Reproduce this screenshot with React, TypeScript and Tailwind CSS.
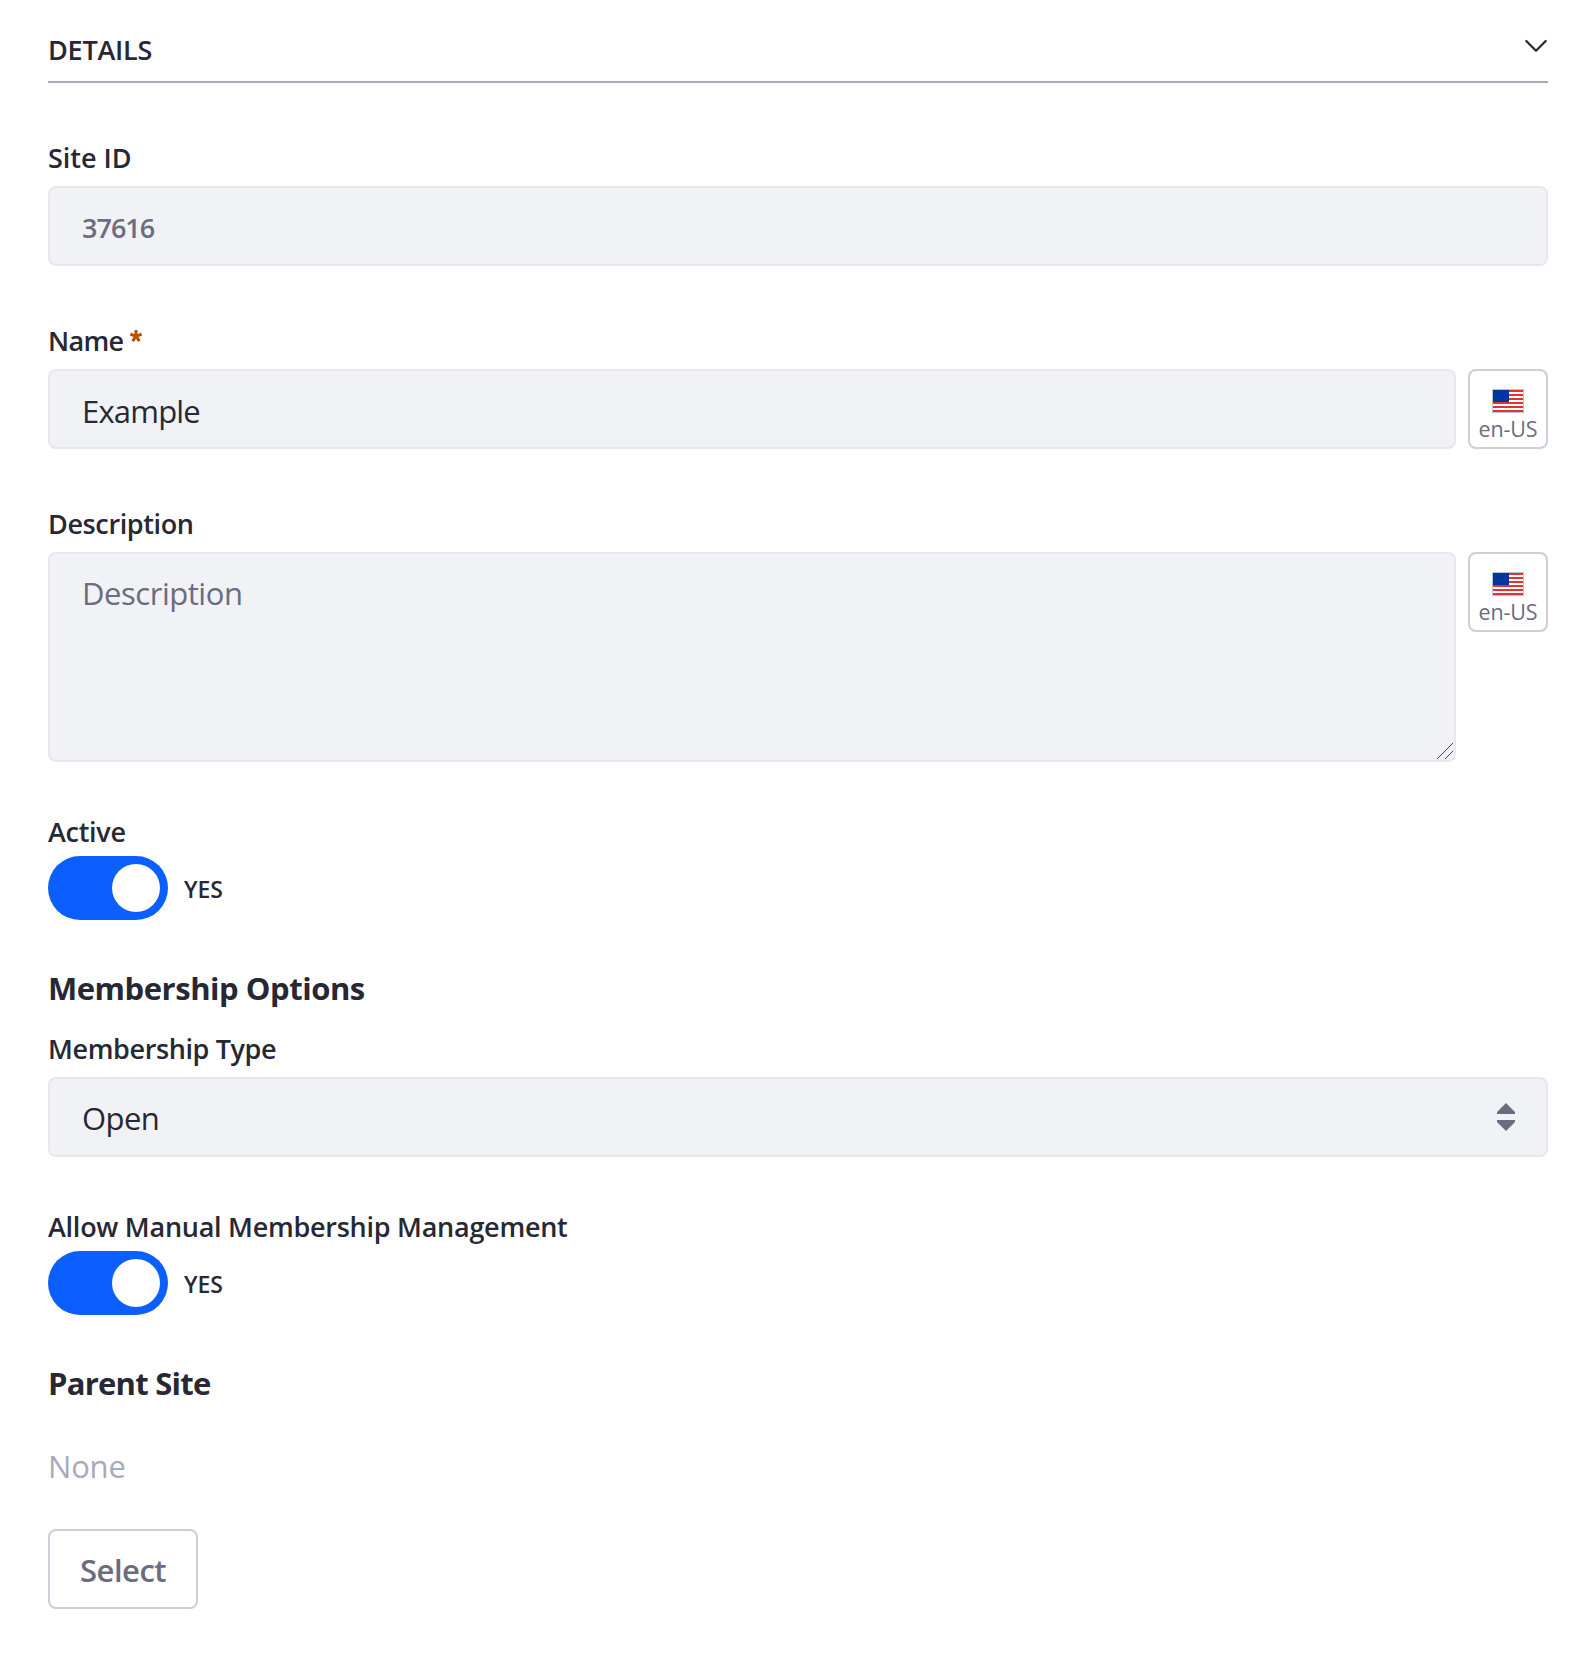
import type { ReactNode } from "react";

function Label({ className = "", children }: { className?: string; children: ReactNode }) {
  return (
    <div className={`flex whitespace-nowrap text-[27px] font-semibold leading-[43px] ${className}`}>
      {children}
    </div>
  );
}

const fieldBox = "rounded-lg border-2 border-[#e7e7ed] bg-[#f1f2f5]";

function RequiredMark() {
  return (
    <svg
      className="ml-[7px] mt-[11px] h-3 w-3"
      viewBox="0 0 12 12"
      stroke="#b95000"
      strokeWidth="3"
      fill="none"
      aria-label="Required"
    >
      <path d="M6 6.2V0M6 6.2L.4 4.2M6 6.2l5.6-2M6 6.2l-3.4 4.9M6 6.2l3.4 4.9" />
    </svg>
  );
}

function Flag() {
  return (
    <svg className="h-6 w-8" viewBox="0 0 32 24" shapeRendering="crispEdges">
      <rect width="32" height="24" fill="#b4c5cf" />
      <rect x="1" y="1" width="30" height="22" fill="#fff" />
      {[1, 5, 9, 13, 17, 21].map((y) => (
        <rect key={y} x="1" y={y} width="30" height="2" fill="#e33232" />
      ))}
      <rect x="1" y="1" width="16" height="12" fill="#0035a0" />
    </svg>
  );
}

function LocaleButton() {
  return (
    <button className="flex h-20 w-20 shrink-0 flex-col items-center gap-1 rounded-lg border-2 border-[#cdced9] bg-white pt-[18px] text-[#6b6c7e]">
      <Flag />
      <span className="whitespace-nowrap text-[21.5px] leading-6 tracking-[-0.1px]">en-US</span>
    </button>
  );
}

function Toggle() {
  return (
    <div className="flex h-16 items-center">
      <div className="flex h-16 w-[120px] items-center justify-end rounded-full bg-[#0b5fff] pr-2">
        <div className="h-12 w-12 rounded-full bg-white" />
      </div>
      <span className="ml-4 pt-0.5 text-[23px] font-semibold tracking-[-0.1px]">YES</span>
    </div>
  );
}

export default function App() {
  return (
    <main className="min-h-[1660px] bg-white px-12 font-['Open_Sans',sans-serif] text-[#272833]">
      <header className="flex h-[83px] items-start justify-between border-b-2 border-[#a7a9bc] pt-7">
        <h2 className="text-[27px] font-semibold leading-[43px] tracking-[-0.24px]">DETAILS</h2>
        <svg
          className="mt-[11px] h-[14px] w-6"
          viewBox="0 0 24 14"
          fill="none"
          stroke="#272833"
          strokeWidth="2.2"
          strokeLinecap="round"
          strokeLinejoin="round"
        >
          <path d="M2.3 2L12 11.7 21.7 2" />
        </svg>
      </header>

      <section className="mt-[53px]">
        <Label className="mb-[7px]">Site ID</Label>
        <div className={`${fieldBox} flex h-20 items-center px-8 pt-[5px] text-[27px] font-semibold tracking-[-1px] text-[#6b6c7e]`}>
          37616
        </div>
      </section>

      <section className="mt-[53px]">
        <Label className="mb-[7px]">
          <span className="tracking-[-0.7px]">Name</span>
          <RequiredMark />
        </Label>
        <div className="flex gap-3">
          <div className={`${fieldBox} flex h-20 flex-1 items-center px-8 pt-1 text-[31px] tracking-[-0.8px]`}>
            Example
          </div>
          <LocaleButton />
        </div>
      </section>

      <section className="mt-[53px]">
        <Label className="mb-[7px] tracking-[-0.38px]">Description</Label>
        <div className="flex items-start gap-3">
          <div className={`${fieldBox} relative h-[210px] flex-1 px-8 pt-[15px] text-[31px] leading-[48px] tracking-[-0.46px] text-[#6b6c7e]`}>
            Description
            <svg className="absolute bottom-px right-px h-4 w-4" viewBox="0 0 16 16" stroke="#45464f" strokeWidth="1">
              <path d="M0 16L16 0M8 16l8-8" />
            </svg>
          </div>
          <LocaleButton />
        </div>
      </section>

      <section className="mt-12">
        <Label className="mb-[3px] tracking-[-0.3px]">Active</Label>
        <Toggle />
      </section>

      <section className="mt-11">
        <h3 className="text-[31px] font-bold leading-[48px] tracking-[-0.46px]">Membership Options</h3>
        <Label className="mb-[7px] mt-[15px] tracking-[-0.38px]">Membership Type</Label>
        <div className={`${fieldBox} flex h-20 items-center justify-between pl-8 pr-[31px]`}>
          <span className="pt-0.5 text-[31px] tracking-[-0.6px]">Open</span>
          <svg className="h-7 w-[18px]" viewBox="0 0 18 28" fill="#6b6c7e">
            <path d="M9 0L18 9v2H0V9zM0 17h18v2L9 28 0 19z" />
          </svg>
        </div>
        <Label className="mb-[3px] mt-12 tracking-[-0.26px]">Allow Manual Membership Management</Label>
        <Toggle />
      </section>

      <section className="mt-11">
        <h3 className="text-[31px] font-bold leading-[48px] tracking-[-0.75px]">Parent Site</h3>
        <p className="mt-[35px] text-[31px] leading-[48px] tracking-[-0.2px] text-[#a7a9bc]">None</p>
        <button className="mt-[39px] flex h-20 w-[150px] items-center rounded-lg border-2 border-[#cdced9] bg-white pl-[30px] pt-0.5 text-[31px] font-semibold tracking-[-0.5px] text-[#6b6c7e]">
          Select
        </button>
      </section>
    </main>
  );
}
